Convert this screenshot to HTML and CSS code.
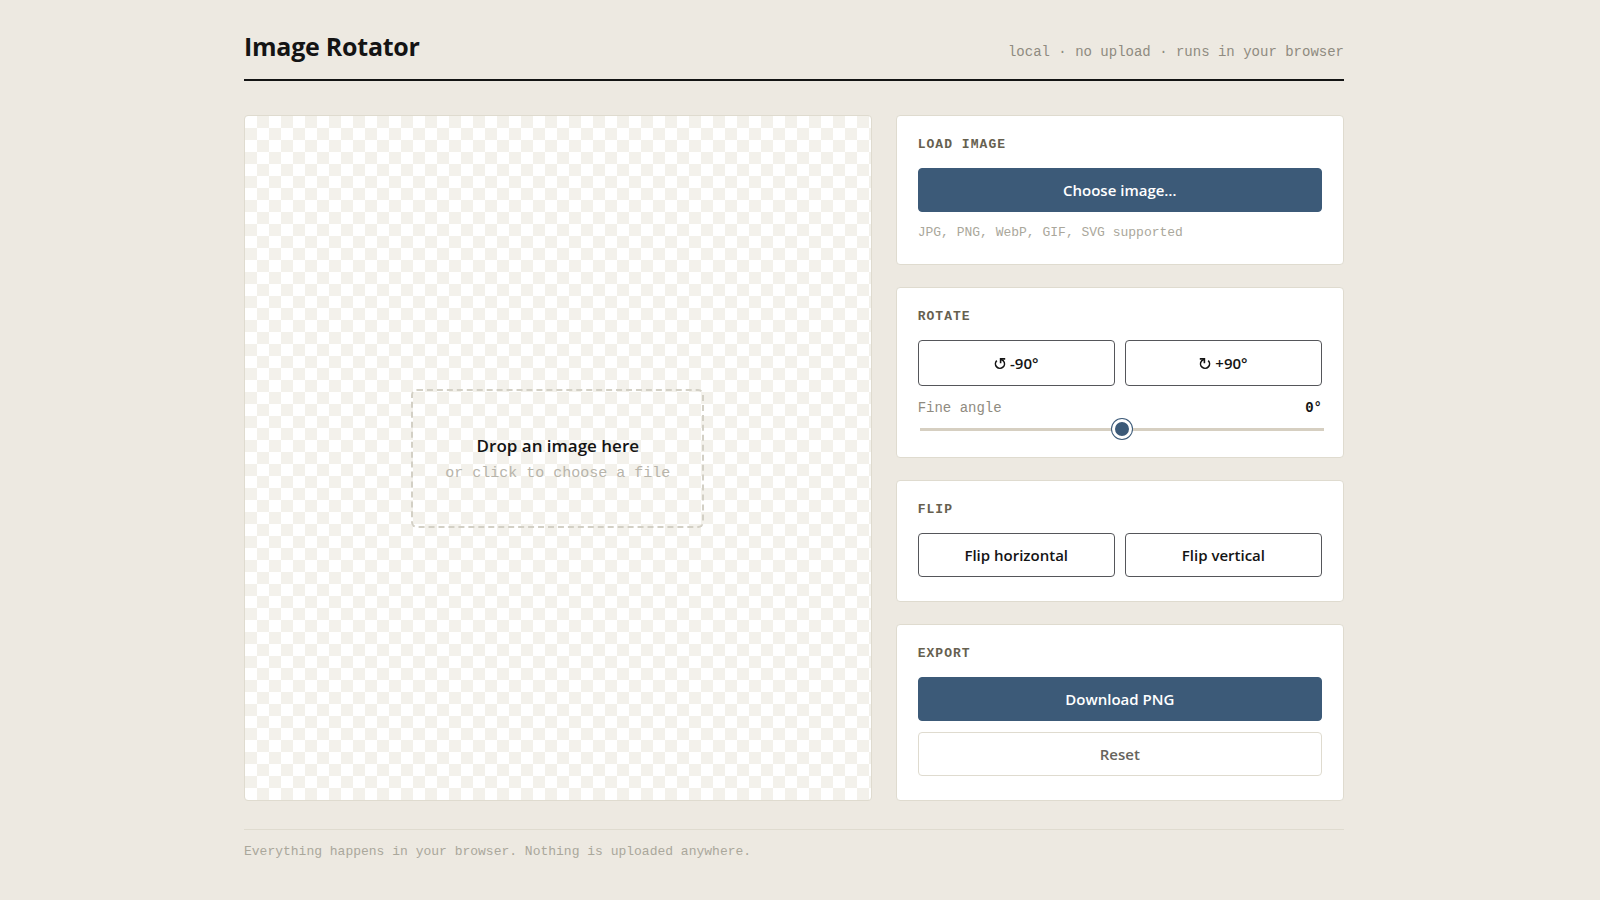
FILE: index.html
```
<!DOCTYPE html>
<html lang="en">
<head>
    <meta charset="UTF-8">
    <meta name="viewport" content="width=device-width, initial-scale=1.0">
    <title>Image Rotator</title>
    <link rel="stylesheet" href="styles.css">
</head>
<body>

<div class="wrap">
    <header>
        <h1>Image Rotator</h1>
        <span class="tagline">local · no upload · runs in your browser</span>
    </header>

    <main class="layout">
        <section class="stage" id="stage">
            <button type="button" class="dropzone" id="dropzone">
                <strong>Drop an image here</strong>
                <span>or click to choose a file</span>
            </button>
        </section>

        <aside class="controls">
            <section class="card">
                <h2>Load image</h2>
                <button type="button" class="btn primary" id="chooseBtn">Choose image…</button>
                <input type="file" id="fileInput" accept="image/*" aria-label="Image file" hidden>
                <p class="hint">JPG, PNG, WebP, GIF, SVG supported</p>
            </section>

            <section class="card">
                <h2>Rotate</h2>
                <div class="row tall">
                    <button type="button" class="btn">
                        <svg class="turn" viewBox="0 0 12 14" aria-hidden="true">
                            <path d="M2.8 4.6A4.5 4.5 0 1 0 9.4 4.9L7 3.4"/>
                            <path d="M11.2 2.9H6.6V7.2"/>
                        </svg>
                        -90°
                    </button>
                    <button type="button" class="btn">
                        <svg class="turn" viewBox="0 0 12 14" aria-hidden="true">
                            <path d="M9.2 4.6A4.5 4.5 0 1 1 2.6 4.9L5 3.4"/>
                            <path d="M0.8 2.9H5.4V7.2"/>
                        </svg>
                        +90°
                    </button>
                </div>
                <div class="angle">
                    <label for="angle">Fine angle</label>
                    <output id="angleValue" for="angle">0°</output>
                </div>
                <input type="range" id="angle" min="-180" max="180" value="0">
            </section>

            <section class="card">
                <h2>Flip</h2>
                <div class="row">
                    <button type="button" class="btn">Flip horizontal</button>
                    <button type="button" class="btn">Flip vertical</button>
                </div>
            </section>

            <section class="card">
                <h2>Export</h2>
                <div class="stack">
                    <button type="button" class="btn primary">Download PNG</button>
                    <button type="button" class="btn ghost">Reset</button>
                </div>
            </section>
        </aside>
    </main>

    <footer>Everything happens in your browser. Nothing is uploaded anywhere.</footer>
</div>

<script>
    const fileInput = document.getElementById('fileInput');
    const angle = document.getElementById('angle');

    document.getElementById('chooseBtn').addEventListener('click', () => fileInput.click());
    document.getElementById('dropzone').addEventListener('click', () => fileInput.click());

    angle.addEventListener('input', () => {
        document.getElementById('angleValue').textContent = angle.value + '°';
    });
</script>

</body>
</html>
```
FILE: styles.css
```
:root {
    --bg: #ede9e1;
    --ink: #141414;
    --muted: #8f8b80;
    --faint: #aaa79b;
    --line: #dfdbcf;
    --accent: #3c5a78;
    --sans: "Segoe UI", "Open Sans", "Noto Sans", sans-serif;
    --mono: "Courier New", "Liberation Mono", monospace;
}

* {
    box-sizing: border-box;
}

body {
    margin: 0;
    padding: 28px 36px 28px 24px;
    background: var(--bg);
    color: var(--ink);
    font-family: var(--sans);
}

.wrap {
    max-width: 1100px;
    margin: 0 auto;
}

header {
    display: flex;
    justify-content: space-between;
    align-items: baseline;
    padding-bottom: 15px;
    margin-bottom: 34px;
    border-bottom: 2px solid var(--ink);
}

h1 {
    margin: 0;
    font-size: 25px;
    line-height: 36px;
    font-weight: 700;
    letter-spacing: -0.01em;
}

.tagline {
    font-family: var(--mono);
    font-size: 14px;
    color: var(--muted);
}

.layout {
    display: grid;
    grid-template-columns: 1.4fr 1fr;
    gap: 24px;
}

.stage {
    display: flex;
    align-items: center;
    justify-content: center;
    border: 1px solid var(--line);
    border-radius: 4px;
    background: repeating-conic-gradient(#f3f1eb 0 25%, #fff 0 50%) 0 0 / 24px 24px;
}

.dropzone {
    display: flex;
    flex-direction: column;
    align-items: center;
    gap: 2px;
    padding: 41px 32px 40px;
    border: 2px dashed #d3d0c5;
    border-radius: 6px;
    background: transparent;
    color: var(--ink);
    cursor: pointer;
}

.dropzone strong {
    font-family: var(--sans);
    font-size: 17px;
    line-height: 28px;
    font-weight: 600;
}

.dropzone span {
    font-family: var(--mono);
    font-size: 15px;
    line-height: 24px;
    color: #b7b4aa;
}

.controls {
    display: flex;
    flex-direction: column;
    gap: 22px;
}

.card {
    padding: 21px 21px 24px;
    border: 1px solid var(--line);
    border-radius: 4px;
    background: #fff;
}

h2 {
    margin: 0 0 16px;
    font-family: var(--mono);
    font-size: 13px;
    line-height: 15px;
    font-weight: 700;
    letter-spacing: 0.08em;
    text-transform: uppercase;
    color: #66604f;
}

.btn {
    display: flex;
    align-items: center;
    justify-content: center;
    gap: 4px;
    width: 100%;
    height: 44px;
    border: 1px solid #55565a;
    border-radius: 4px;
    background: #fff;
    color: var(--ink);
    font-family: var(--sans);
    font-size: 15px;
    font-weight: 600;
    cursor: pointer;
}

.btn.primary {
    border-color: var(--accent);
    background: var(--accent);
    color: #fff;
}

.btn.ghost {
    border-color: var(--line);
    color: #66645c;
}

.turn {
    width: 12px;
    height: 14px;
    fill: none;
    stroke: currentColor;
    stroke-width: 1.6;
}

.row {
    display: grid;
    grid-template-columns: 1fr 1fr;
    gap: 10px;
}

.row.tall .btn {
    height: 46px;
}

.stack {
    display: flex;
    flex-direction: column;
    gap: 11px;
}

.hint {
    margin: 14px 0 0;
    font-family: var(--mono);
    font-size: 13px;
    line-height: 14px;
    color: var(--faint);
}

.angle {
    display: flex;
    justify-content: space-between;
    margin-top: 12px;
    font-family: var(--mono);
    font-size: 14px;
    line-height: 20px;
    color: var(--muted);
}

.angle output {
    font-weight: 700;
    color: var(--ink);
}

input[type="range"] {
    display: block;
    width: 100%;
    height: 8px;
    margin: 7px 2px 0;
    background: transparent;
    -webkit-appearance: none;
    appearance: none;
}

input[type="range"]::-webkit-slider-runnable-track {
    height: 3px;
    background: #d6cfc1;
}

input[type="range"]::-webkit-slider-thumb {
    -webkit-appearance: none;
    width: 20px;
    height: 20px;
    margin-top: -9px;
    border: 3px solid #fff;
    border-radius: 50%;
    background: var(--accent);
    box-shadow: 0 0 0 1px var(--accent);
}

footer {
    margin-top: 28px;
    padding-top: 14px;
    border-top: 1px solid var(--line);
    font-family: var(--mono);
    font-size: 13px;
    line-height: 16px;
    color: var(--faint);
}
```
